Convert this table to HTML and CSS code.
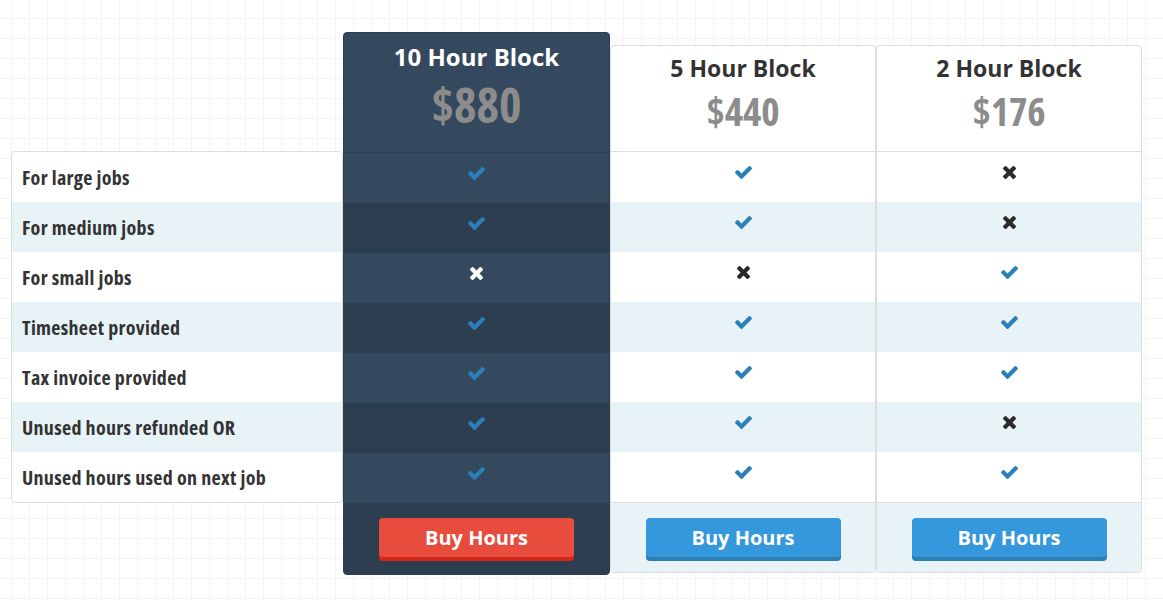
FILE: index.html
```html
<!DOCTYPE html>
<html>
<head>
<meta charset="utf-8">
<link rel="stylesheet" href="styles.css">
</head>
<body>
<svg width="0" height="0" class="defs">
  <defs>
    <symbol id="ok" viewBox="121 334 1550 1188"><path d="M1671 566q0 40-28 68l-724 724-136 136q-28 28-68 28t-68-28l-136-136-362-362q-28-28-28-68t28-68l136-136q28-28 68-28t68 28l294 295 656-657q28-28 68-28t68 28l136 136q28 28 28 68z"/></symbol>
    <symbol id="no" viewBox="110 366 1188 1188"><path d="M1298 1322q0 40-28 68l-136 136q-28 28-68 28t-68-28l-294-294-294 294q-28 28-68 28t-68-28l-136-136q-28-28-28-68t28-68l294-294-294-294q-28-28-28-68t28-68l136-136q28-28 68-28t68 28l294 294 294-294q28-28 68-28t68 28l136 136q28 28 28 68t-28 68l-294 294 294 294q28 28 28 68z"/></symbol>
  </defs>
</svg>
<div class="pricing">
  <div class="labels">
    <div class="row">For large jobs</div>
    <div class="row">For medium jobs</div>
    <div class="row">For small jobs</div>
    <div class="row">Timesheet provided</div>
    <div class="row">Tax invoice provided</div>
    <div class="row">Unused hours refunded OR</div>
    <div class="row">Unused hours used on next job</div>
  </div>

  <div class="plan featured">
    <div class="head">
      <div class="title">10 Hour Block</div>
      <div class="price">$880</div>
    </div>
    <div class="row"><svg class="ok"><use href="#ok"/></svg></div>
    <div class="row"><svg class="ok"><use href="#ok"/></svg></div>
    <div class="row"><svg class="no"><use href="#no"/></svg></div>
    <div class="row"><svg class="ok"><use href="#ok"/></svg></div>
    <div class="row"><svg class="ok"><use href="#ok"/></svg></div>
    <div class="row"><svg class="ok"><use href="#ok"/></svg></div>
    <div class="row"><svg class="ok"><use href="#ok"/></svg></div>
    <div class="foot"><button class="btn btn-red">Buy Hours</button></div>
  </div>

  <div class="plan">
    <div class="head">
      <div class="title">5 Hour Block</div>
      <div class="price">$440</div>
    </div>
    <div class="row"><svg class="ok"><use href="#ok"/></svg></div>
    <div class="row"><svg class="ok"><use href="#ok"/></svg></div>
    <div class="row"><svg class="no"><use href="#no"/></svg></div>
    <div class="row"><svg class="ok"><use href="#ok"/></svg></div>
    <div class="row"><svg class="ok"><use href="#ok"/></svg></div>
    <div class="row"><svg class="ok"><use href="#ok"/></svg></div>
    <div class="row"><svg class="ok"><use href="#ok"/></svg></div>
    <div class="foot"><button class="btn btn-blue">Buy Hours</button></div>
  </div>

  <div class="plan">
    <div class="head">
      <div class="title">2 Hour Block</div>
      <div class="price">$176</div>
    </div>
    <div class="row"><svg class="no"><use href="#no"/></svg></div>
    <div class="row"><svg class="no"><use href="#no"/></svg></div>
    <div class="row"><svg class="ok"><use href="#ok"/></svg></div>
    <div class="row"><svg class="ok"><use href="#ok"/></svg></div>
    <div class="row"><svg class="ok"><use href="#ok"/></svg></div>
    <div class="row"><svg class="no"><use href="#no"/></svg></div>
    <div class="row"><svg class="ok"><use href="#ok"/></svg></div>
    <div class="foot"><button class="btn btn-blue">Buy Hours</button></div>
  </div>
</div>
</body>
</html>
```
FILE: styles.css
```css
html, body {
  margin: 0;
  padding: 0;
}
body {
  width: 1163px;
  height: 600px;
  overflow: hidden;
  font-family: "Open Sans", "Liberation Sans", sans-serif;
  color: #333;
  background-color: #fff;
  background-image:
    linear-gradient(to right, #f4f4f4 1px, transparent 1px),
    linear-gradient(to bottom, #f4f4f4 1px, transparent 1px);
  background-size: 18px 20px;
  background-position: 11px 18px;
}
.defs {
  position: absolute;
}
.pricing {
  display: flex;
  align-items: flex-start;
  padding: 32px 0 0 11px;
}
.labels {
  width: 332px;
  box-sizing: border-box;
  margin-top: 119px;
  border: 1px solid #ddd;
  border-radius: 4px;
  background: #fff;
  overflow: hidden;
}
.row {
  height: 50px;
  display: flex;
  align-items: center;
}
.labels .row {
  padding-left: 10px;
  font-size: 20px;
  font-weight: 700;
  font-stretch: 75%;
  letter-spacing: 0.3px;
  color: #333;
  padding-top: 0;
  box-sizing: border-box;
}
.labels .row:nth-child(even),
.plan .row:nth-child(odd) {
  background: #e8f3f8;
}
.plan .row:nth-child(even) {
  background: #fff;
}
.plan {
  width: 266px;
  box-sizing: border-box;
  margin-top: 13px;
  border: 1px solid #ddd;
  border-radius: 4px;
  background: #fff;
  overflow: hidden;
  display: flex;
  flex-direction: column;
}
.plan .row {
  justify-content: center;
  padding-bottom: 10px;
  box-sizing: border-box;
}
.head {
  height: 106px;
  box-sizing: border-box;
  border-bottom: 1px solid #ddd;
  text-align: center;
  padding-top: 7px;
}
.title {
  font-size: 23px;
  font-weight: 700;
  line-height: 30px;
  color: #333;
}
.price {
  font-size: 39px;
  font-weight: 700;
  font-stretch: 75%;
  line-height: 50px;
  margin-top: 3px;
  color: #8c8c8c;
}
svg.ok {
  width: 17px;
  height: 13px;
  fill: #2a80b9;
}
svg.no {
  width: 13px;
  height: 13px;
  fill: #2b2b2b;
}
.foot {
  height: 70px;
  box-sizing: border-box;
  border-top: 1px solid #ddd;
  background: #e8f3f8;
  display: flex;
  justify-content: center;
  padding-top: 15px;
}
.btn {
  width: 195px;
  height: 39px;
  border: 0;
  border-radius: 4px;
  padding: 0;
  font-family: "Open Sans", "Liberation Sans", sans-serif;
  font-size: 20px;
  font-weight: 700;
  color: #fff;
  cursor: pointer;
}
.btn-blue {
  background: #3598dc;
  box-shadow: 0 4px 0 #2a7fb6;
}
.btn-red {
  background: #e74c3c;
  box-shadow: 0 4px 0 #d4271a;
}

/* featured plan */
.plan.featured {
  width: 267px;
  margin-top: 0;
  border: 1px solid #2c3e50;
  background: #34495e;
}
.featured .head {
  height: 120px;
  border-bottom: 1px solid #2c3e50;
  padding-top: 9px;
}
.featured .title {
  font-size: 24px;
  color: #fff;
}
.featured .price {
  font-size: 48px;
  line-height: 54px;
  margin-top: 6px;
}
.featured .row:nth-child(even) {
  background: #34495e;
}
.featured .row:nth-child(odd) {
  background: #2c3e50;
}
.featured svg.no {
  fill: #fff;
}
.featured .foot {
  height: 71px;
  border-top: 0;
  background: #2c3e50;
  padding-top: 15px;
}
```
